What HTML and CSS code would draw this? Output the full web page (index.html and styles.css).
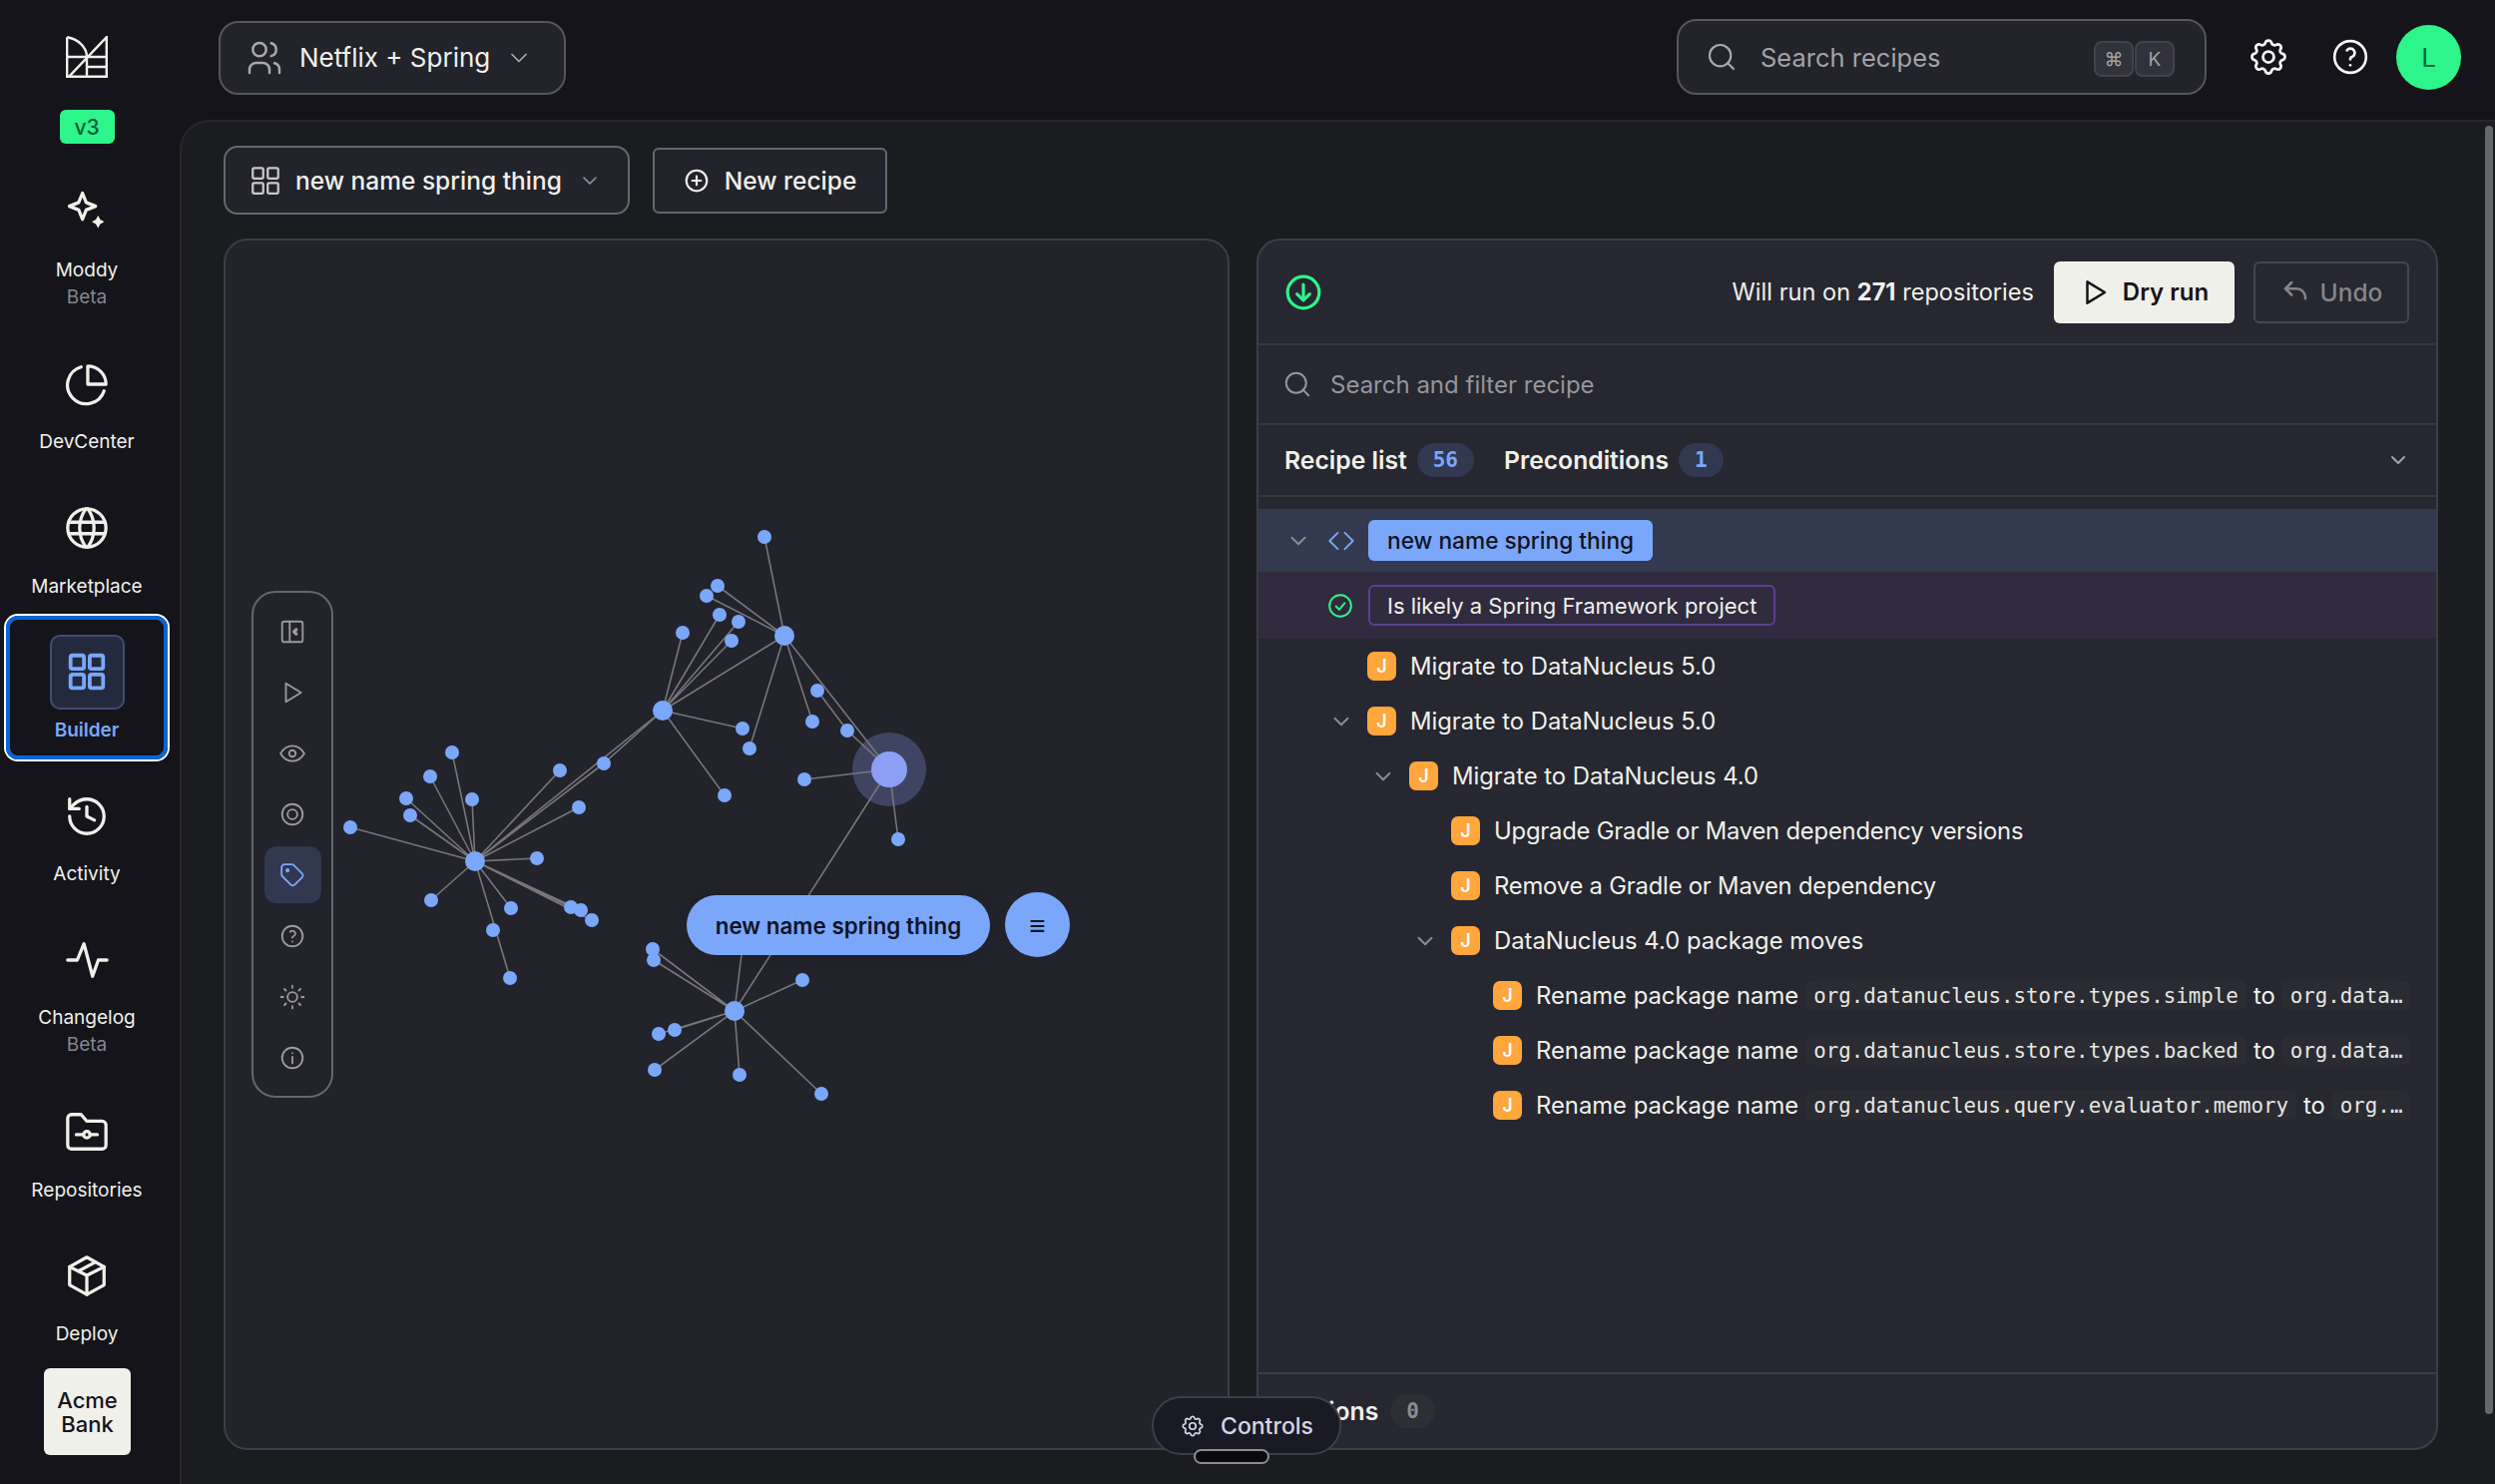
FILE: index.html
```html
<!DOCTYPE html>
<html lang="en">
  <head>
    <meta charset="UTF-8" />
    <meta name="viewport" content="width=device-width, initial-scale=1.0" />
    <title>Recipe Builder</title>
    <link rel="stylesheet" href="styles.css">
  </head>
  <body>
    <svg class="sprite" xmlns="http://www.w3.org/2000/svg">
      <symbol id="i-chevron" viewBox="0 0 24 24"><path d="M6 9l6 6 6-6"/></symbol>
      <symbol id="i-users" viewBox="0 0 24 24"><circle cx="9" cy="7" r="4"/><path d="M3 21v-2a4 4 0 0 1 4-4h4a4 4 0 0 1 4 4v2"/><path d="M16 3.13a4 4 0 0 1 0 7.75"/><path d="M21 21v-2a4 4 0 0 0-3-3.85"/></symbol>
      <symbol id="i-search" viewBox="0 0 24 24"><circle cx="11" cy="11" r="8"/><path d="M21 21l-4.5-4.5"/></symbol>
      <symbol id="i-gear" viewBox="0 0 24 24"><path d="M10.325 4.317c.426-1.756 2.924-1.756 3.35 0a1.724 1.724 0 0 0 2.573 1.066c1.543-.94 3.31.826 2.37 2.37a1.724 1.724 0 0 0 1.065 2.572c1.756.426 1.756 2.924 0 3.35a1.724 1.724 0 0 0-1.066 2.573c.94 1.543-.826 3.31-2.37 2.37a1.724 1.724 0 0 0-2.572 1.065c-.426 1.756-2.924 1.756-3.35 0a1.724 1.724 0 0 0-2.573-1.066c-1.543.94-3.31-.826-2.37-2.37a1.724 1.724 0 0 0-1.065-2.572c-1.756-.426-1.756-2.924 0-3.35a1.724 1.724 0 0 0 1.066-2.573c-.94-1.543.826-3.31 2.37-2.37c1 .608 2.296.07 2.572-1.065z"/><circle cx="12" cy="12" r="3"/></symbol>
      <symbol id="i-help" viewBox="0 0 24 24"><circle cx="12" cy="12" r="9.5"/><path d="M12 17v.01"/><path d="M12 13.5a1.5 1.5 0 0 1 1-1.5a2.6 2.6 0 1 0-3-4"/></symbol>
      <symbol id="i-grid" viewBox="0 0 24 24"><rect x="3.5" y="3.5" width="7" height="7" rx="1"/><rect x="13.5" y="3.5" width="7" height="7" rx="1"/><rect x="3.5" y="13.5" width="7" height="7" rx="1"/><rect x="13.5" y="13.5" width="7" height="7" rx="1"/></symbol>
      <symbol id="i-plus" viewBox="0 0 24 24"><circle cx="12" cy="12" r="9.5"/><path d="M12 8v8M8 12h8"/></symbol>
      <symbol id="i-play" viewBox="0 0 24 24"><path d="M6 3.5v17L20 12z"/></symbol>
      <symbol id="i-undo" viewBox="0 0 24 24"><path d="M9 14L4 9l5-5"/><path d="M4 9h9a7 7 0 0 1 7 7v1"/></symbol>
      <symbol id="i-down" viewBox="0 0 24 24"><circle cx="12" cy="12" r="10"/><path d="M12 7v10M8 13l4 4 4-4"/></symbol>
      <symbol id="i-check" viewBox="0 0 24 24"><circle cx="12" cy="12" r="10"/><path d="M8 12.5l3 3 5-6"/></symbol>
      <symbol id="i-code" viewBox="0 0 24 24"><path d="M9 5l-7 7 7 7"/><path d="M15 5l7 7-7 7"/></symbol>
      <symbol id="i-spark" viewBox="0 0 32 32"><path d="M12.5 2l3 7.500 7.500 3-7.500 3-3 7.500-3-7.500-7.500-3 7.500-3z"/><path class="solid" d="M25 20l1.800 3.200 3.200 1.800-3.200 1.800-1.800 3.200-1.800-3.200-3.200-1.800 3.200-1.800z"/></symbol>
      <symbol id="i-pie" viewBox="0 0 24 24"><path d="M12.500 2.500V12H22a9.500 9.500 0 0 0-9.500-9.500z"/><path d="M9 3a9.800 9.800 0 1 0 12 12.500"/></symbol>
      <symbol id="i-globe" viewBox="0 0 24 24"><circle cx="12" cy="12" r="10"/><path d="M2.600 9h18.800M2.600 15h18.800"/><path d="M11.500 2a17 17 0 0 0 0 20M12.500 2a17 17 0 0 1 0 20"/></symbol>
      <symbol id="i-history" viewBox="0 0 24 24"><path d="M3 12a9 9 0 1 0 9-9 9.750 9.750 0 0 0-6.740 2.740L3 8"/><path d="M3 3v5h5"/><path d="M12 7v5l4 2"/></symbol>
      <symbol id="i-pulse" viewBox="0 0 24 24"><path d="M2 12h5l3.500-8.500 4.500 17 3-8.500h4.500"/></symbol>
      <symbol id="i-folder" viewBox="0 0 24 24"><path d="M4.500 3H9l3 3.500h8a2 2 0 0 1 2 2V19a2 2 0 0 1-2 2H4a2 2 0 0 1-2-2V5a2 2 0 0 1 2-2"/><circle cx="12" cy="13.500" r="1.700"/><path d="M6.500 13.500h3.800M13.700 13.500h3.800"/></symbol>
      <symbol id="i-box" viewBox="0 0 24 24"><path d="M12 2.500l9 5v9.500l-9 5-9-5V7.500z"/><path d="M12 12l9-4.500M12 12v10M12 12L3 7.500M16.500 5l-9 4.800"/></symbol>
      <symbol id="i-collapse" viewBox="0 0 24 24"><rect x="2.500" y="2.500" width="19" height="19" rx="2"/><path d="M9.500 2.500v19"/><path class="thick" d="M15.500 10l-2 2 2 2"/></symbol>
      <symbol id="i-eye" viewBox="0 0 24 24"><circle cx="12" cy="12" r="3"/><path d="M23 12c-2.800 4.700-6.400 7-11 7s-8.200-2.300-11-7c2.800-4.700 6.400-7 11-7s8.200 2.300 11 7"/></symbol>
      <symbol id="i-target" viewBox="0 0 24 24"><circle cx="12" cy="12" r="9.500"/><circle cx="12" cy="12" r="4.500"/></symbol>
      <symbol id="i-tag" viewBox="0 0 24 24"><circle cx="7.500" cy="7.500" r="1"/><path d="M2 5v6.500a2 2 0 0 0 .6 1.400l8 8a2.400 2.400 0 0 0 3.400 0l7-7a2.400 2.400 0 0 0 0-3.400l-8-8A2 2 0 0 0 11.500 2H5a3 3 0 0 0-3 3z"/></symbol>
      <symbol id="i-sun" viewBox="0 0 24 24"><circle cx="12" cy="12" r="4.500"/><path d="M1.500 12h2M12 1.500v2M20.500 12h2M12 20.500v2M4.600 4.600l1.400 1.400M19.400 4.600L18 6M18 18l1.400 1.400M6 18l-1.400 1.400"/></symbol>
      <symbol id="i-info" viewBox="0 0 24 24"><circle cx="12" cy="12" r="9.500"/><path d="M12 7.500v.01M12 11v6"/></symbol>
      <symbol id="i-logo" viewBox="0 0 42 42"><path d="M1.200 1.200V40.800H40.800V1.200L3 40.800"/><path d="M1.200 1.200C12 3 21 11 21 21M1.200 21H40.800M21 31H40.800M21 21V40.800"/></symbol>
    </svg>

    <div class="app">
      <nav class="sidebar">
        <div class="brand">
          <svg class="logo"><use href="#i-logo"/></svg>
          <span class="version">v3</span>
        </div>
        <a class="nav-item"><span class="nav-icon"><svg class="icon icon-spark"><use href="#i-spark"/></svg></span><span class="nav-label">Moddy</span><span class="nav-note">Beta</span></a>
        <a class="nav-item"><span class="nav-icon"><svg class="icon"><use href="#i-pie"/></svg></span><span class="nav-label">DevCenter</span></a>
        <a class="nav-item"><span class="nav-icon"><svg class="icon"><use href="#i-globe"/></svg></span><span class="nav-label">Marketplace</span></a>
        <a class="nav-item active"><span class="nav-icon"><svg class="icon"><use href="#i-grid"/></svg></span><span class="nav-label">Builder</span></a>
        <a class="nav-item"><span class="nav-icon"><svg class="icon"><use href="#i-history"/></svg></span><span class="nav-label">Activity</span></a>
        <a class="nav-item"><span class="nav-icon"><svg class="icon"><use href="#i-pulse"/></svg></span><span class="nav-label">Changelog</span><span class="nav-note">Beta</span></a>
        <a class="nav-item"><span class="nav-icon"><svg class="icon"><use href="#i-folder"/></svg></span><span class="nav-label">Repositories</span></a>
        <a class="nav-item"><span class="nav-icon"><svg class="icon"><use href="#i-box"/></svg></span><span class="nav-label">Deploy</span></a>
        <div class="org-tile">Acme<br />Bank</div>
      </nav>

      <div class="page">
        <header class="topbar">
          <button class="org-select">
            <svg class="icon icon-users"><use href="#i-users"/></svg>
            <span>Netflix + Spring</span>
            <svg class="icon icon-chevron"><use href="#i-chevron"/></svg>
          </button>
          <div class="topbar-right">
            <div class="global-search">
              <svg class="icon icon-search"><use href="#i-search"/></svg>
              <span class="global-search-text">Search recipes</span>
              <kbd class="key">⌘</kbd><kbd class="key">K</kbd>
            </div>
            <svg class="icon icon-top icon-gear"><use href="#i-gear"/></svg>
            <svg class="icon icon-top"><use href="#i-help"/></svg>
            <div class="avatar">L</div>
          </div>
        </header>

        <main class="main">
          <div class="toolbar">
            <button class="recipe-select">
              <svg class="icon icon-grid"><use href="#i-grid"/></svg>
              <span>new name spring thing</span>
              <svg class="icon icon-chevron-sm"><use href="#i-chevron"/></svg>
            </button>
            <button class="new-recipe">
              <svg class="icon icon-plus"><use href="#i-plus"/></svg>
              <span>New recipe</span>
            </button>
          </div>

          <div class="panels">
            <section class="graph-panel">
              <svg class="graph" viewBox="226 241 1004 1210">
                <circle class="halo" cx="891" cy="771" r="37"/>
                <g class="edges">
                  <path d="M476 863L351 829M476 863L411 817M476 863L407 800M476 863L431 778M476 863L453 754M476 863L473 801M476 863L561 772M476 863L580 809M476 863L664 712M476 863L605 765M476 863L538 860M476 863L572 909M476 863L582 912M476 863L593 922M476 863L512 910M476 863L511 980M476 863L432 902"/>
                  <path d="M664 712L605 765M664 712L684 634M664 712L721 616M664 712L740 623M664 712L733 642M664 712L786 637M664 712L744 730M664 712L726 797"/>
                  <path d="M786 637L766 538M786 637L719 587M786 637L708 597M786 637L751 750M786 637L814 723M786 637L891 771M819 692L849 732L891 771"/>
                  <path d="M891 771L806 781M891 771L900 841M891 771L736 1013M736 1013L750 900"/>
                  <path d="M736 1013L654 951M736 1013L655 962M736 1013L804 982M736 1013L676 1032M736 1013L660 1036M736 1013L656 1072M736 1013L741 1077M736 1013L823 1096"/>
                </g>
                <g class="leaves">
                  <circle cx="351" cy="829" r="7"/><circle cx="411" cy="817" r="7"/><circle cx="407" cy="800" r="7"/><circle cx="431" cy="778" r="7"/><circle cx="453" cy="754" r="7"/><circle cx="473" cy="801" r="7"/><circle cx="561" cy="772" r="7"/><circle cx="580" cy="809" r="7"/><circle cx="605" cy="765" r="7"/><circle cx="538" cy="860" r="7"/><circle cx="572" cy="909" r="7"/><circle cx="582" cy="912" r="7"/><circle cx="593" cy="922" r="7"/><circle cx="512" cy="910" r="7"/><circle cx="494" cy="932" r="7"/><circle cx="511" cy="980" r="7"/><circle cx="432" cy="902" r="7"/>
                  <circle cx="684" cy="634" r="7"/><circle cx="721" cy="616" r="7"/><circle cx="740" cy="623" r="7"/><circle cx="733" cy="642" r="7"/><circle cx="744" cy="730" r="7"/><circle cx="726" cy="797" r="7"/>
                  <circle cx="766" cy="538" r="7"/><circle cx="719" cy="587" r="7"/><circle cx="708" cy="597" r="7"/><circle cx="751" cy="750" r="7"/><circle cx="814" cy="723" r="7"/><circle cx="819" cy="692" r="7"/><circle cx="849" cy="732" r="7"/>
                  <circle cx="806" cy="781" r="7"/><circle cx="900" cy="841" r="7"/>
                  <circle cx="654" cy="951" r="7"/><circle cx="655" cy="962" r="7"/><circle cx="804" cy="982" r="7"/><circle cx="676" cy="1032" r="7"/><circle cx="660" cy="1036" r="7"/><circle cx="656" cy="1072" r="7"/><circle cx="741" cy="1077" r="7"/><circle cx="823" cy="1096" r="7"/>
                  <circle cx="476" cy="863" r="10"/><circle cx="664" cy="712" r="10"/><circle cx="786" cy="637" r="10"/><circle cx="736" cy="1013" r="10"/>
                </g>
                <circle class="focus" cx="891" cy="771" r="18"/>
              </svg>

              <div class="rail">
                <span class="rail-item"><svg class="icon"><use href="#i-collapse"/></svg></span>
                <span class="rail-item"><svg class="icon"><use href="#i-play"/></svg></span>
                <span class="rail-item"><svg class="icon"><use href="#i-eye"/></svg></span>
                <span class="rail-item"><svg class="icon"><use href="#i-target"/></svg></span>
                <span class="rail-item active"><svg class="icon"><use href="#i-tag"/></svg></span>
                <span class="rail-item"><svg class="icon"><use href="#i-help"/></svg></span>
                <span class="rail-item"><svg class="icon"><use href="#i-sun"/></svg></span>
                <span class="rail-item"><svg class="icon"><use href="#i-info"/></svg></span>
              </div>

              <div class="node-label">new name spring thing</div>
              <div class="node-menu">≡</div>
            </section>

            <section class="recipe-panel">
              <div class="run-bar">
                <svg class="icon icon-status"><use href="#i-down"/></svg>
                <span class="run-text">Will run on <b>271</b> repositories</span>
                <button class="dry-run"><svg class="icon icon-btn"><use href="#i-play"/></svg>Dry run</button>
                <button class="undo"><svg class="icon icon-btn"><use href="#i-undo"/></svg>Undo</button>
              </div>
              <div class="filter-bar">
                <svg class="icon icon-filter"><use href="#i-search"/></svg>
                <span>Search and filter recipe</span>
              </div>
              <div class="tab-bar">
                <span class="tab-name">Recipe list</span>
                <span class="count">56</span>
                <span class="tab-name tab-second">Preconditions</span>
                <span class="count">1</span>
                <svg class="icon icon-tabs-chevron"><use href="#i-chevron"/></svg>
              </div>

              <div class="tree">
                <div class="tree-root">
                  <svg class="icon icon-caret"><use href="#i-chevron"/></svg>
                  <svg class="icon icon-code"><use href="#i-code"/></svg>
                  <span class="root-chip">new name spring thing</span>
                </div>
                <div class="tree-precondition">
                  <svg class="icon icon-ok"><use href="#i-check"/></svg>
                  <span class="pre-chip">Is likely a Spring Framework project</span>
                </div>

                <div class="tree-row lvl-0"><span class="caret-slot"></span><span class="java">J</span><span class="row-text">Migrate to DataNucleus 5.0</span></div>
                <div class="tree-row lvl-0"><span class="caret-slot"><svg class="icon icon-caret"><use href="#i-chevron"/></svg></span><span class="java">J</span><span class="row-text">Migrate to DataNucleus 5.0</span></div>
                <div class="tree-row lvl-1"><span class="caret-slot"><svg class="icon icon-caret"><use href="#i-chevron"/></svg></span><span class="java">J</span><span class="row-text">Migrate to DataNucleus 4.0</span></div>
                <div class="tree-row lvl-2"><span class="caret-slot"></span><span class="java">J</span><span class="row-text row-long">Upgrade Gradle or Maven dependency versions</span></div>
                <div class="tree-row lvl-2"><span class="caret-slot"></span><span class="java">J</span><span class="row-text row-long">Remove a Gradle or Maven dependency</span></div>
                <div class="tree-row lvl-2"><span class="caret-slot"><svg class="icon icon-caret"><use href="#i-chevron"/></svg></span><span class="java">J</span><span class="row-text">DataNucleus 4.0 package moves</span></div>
                <div class="tree-row lvl-3"><span class="caret-slot"></span><span class="java">J</span><span class="row-text">Rename package name</span><code class="pkg">org.datanucleus.store.types.simple</code><span class="row-to">to</span><code class="pkg">org.data…</code></div>
                <div class="tree-row lvl-3"><span class="caret-slot"></span><span class="java">J</span><span class="row-text">Rename package name</span><code class="pkg">org.datanucleus.store.types.backed</code><span class="row-to">to</span><code class="pkg">org.data…</code></div>
                <div class="tree-row lvl-3"><span class="caret-slot"></span><span class="java">J</span><span class="row-text">Rename package name</span><code class="pkg">org.datanucleus.query.evaluator.memory</code><span class="row-to">to</span><code class="pkg">org.…</code></div>
              </div>

              <div class="options-bar">
                <span class="tab-name">Options</span>
                <span class="count count-empty">0</span>
              </div>
            </section>
          </div>

          <div class="scrollbar"></div>
          <div class="controls">
            <svg class="icon icon-controls"><use href="#i-gear"/></svg>
            <span>Controls</span>
          </div>
          <div class="controls-handle"></div>
        </main>
      </div>
    </div>
  </body>
</html>
```

FILE: styles.css
```css
* {
  box-sizing: border-box;
}

body {
  margin: 0;
  padding: 0;
  font-family: Inter, "Noto Sans", sans-serif;
  background-color: #14141a;
  color: #f0f0ea;
  height: 100vh;
  overflow: hidden;
}

button {
  font-family: inherit;
  cursor: pointer;
  white-space: nowrap;
}

.sprite {
  display: none;
}

.sprite .solid {
  fill: currentColor;
  stroke: none;
}

.sprite .thick {
  stroke-width: 3;
}

.icon {
  fill: none;
  stroke: currentColor;
  stroke-width: 2;
  stroke-linecap: round;
  stroke-linejoin: round;
  flex-shrink: 0;
}

.app {
  display: flex;
  height: 100%;
}

/* left nav */
.sidebar {
  width: 180px;
  flex-shrink: 0;
  padding-left: 6px;
  display: flex;
  flex-direction: column;
}

.brand {
  height: 156px;
  width: 162px;
  padding-top: 36px;
  display: flex;
  flex-direction: column;
  align-items: center;
  gap: 32px;
}

.logo {
  width: 42px;
  height: 42px;
  fill: none;
  stroke: #f0f0ea;
  stroke-width: 2.4;
}

.version {
  width: 55px;
  height: 34px;
  border-radius: 6px;
  background-color: #2df58b;
  color: #0f5c38;
  font-size: 21px;
  font-weight: 500;
  display: flex;
  align-items: center;
  justify-content: center;
}

.nav-item {
  width: 162px;
  padding: 19px 0 16.250px;
  display: flex;
  flex-direction: column;
  align-items: center;
  border-radius: 12px;
}

.nav-icon {
  width: 75px;
  height: 75px;
  margin-bottom: 7px;
  border-radius: 10px;
  display: flex;
  align-items: center;
  justify-content: center;
}

.nav-icon .icon {
  width: 46px;
  height: 46px;
  stroke-width: 1.700;
}

.nav-icon .icon-spark {
  width: 40px;
  height: 40px;
  stroke-width: 2.600;
  margin-bottom: 4px;
}

.nav-label {
  font-size: 19px;
  line-height: 27px;
}

.nav-note {
  font-size: 19px;
  line-height: 28px;
  color: #85858e;
}

.nav-item.active {
  border: 4px solid #0a66d6;
  box-shadow: 0 0 0 2px #ffffff;
  padding: 15px 0 12.250px;
}

.nav-item.active .nav-icon {
  background-color: #232a3d;
  border: 2px solid #3e4d73;
  color: #7ba7fa;
}

.nav-item.active .nav-icon .icon {
  stroke-width: 2;
}

.nav-item.active .nav-label {
  color: #7ba7fa;
  font-weight: 600;
}

.org-tile {
  width: 87px;
  height: 87px;
  margin: 5px 0 0 38px;
  background-color: #f0f0ea;
  color: #14141a;
  border-radius: 6px;
  font-size: 22px;
  font-weight: 500;
  line-height: 24px;
  text-align: center;
  display: flex;
  align-items: center;
  justify-content: center;
}

/* top bar */
.page {
  flex: 1;
  display: flex;
  flex-direction: column;
  min-width: 0;
}

.topbar {
  height: 120px;
  flex-shrink: 0;
  padding: 0 34px 0 39px;
  display: flex;
  align-items: center;
  justify-content: space-between;
}

.org-select {
  width: 348px;
  height: 74px;
  margin-top: -5px;
  padding: 0 24px;
  background-color: #22232b;
  border: 2px solid #55565c;
  border-radius: 20px;
  color: #f0f0ea;
  font-size: 26px;
  display: flex;
  align-items: center;
  gap: 15px;
}

.icon-users {
  width: 40px;
  height: 40px;
  color: #a9a9af;
  stroke-width: 1.500;
}

.icon-chevron {
  width: 28px;
  height: 28px;
  color: #a9a9af;
  stroke-width: 1.500;
}

.topbar-right {
  display: flex;
  align-items: center;
  gap: 42px;
  margin-top: -6px;
}

.global-search {
  width: 531px;
  height: 76px;
  padding: 0 30px 0 27px;
  background-color: #22232b;
  border: 2px solid #55565c;
  border-radius: 20px;
  display: flex;
  align-items: center;
  font-size: 25.500px;
  color: #a2a2a8;
}

.icon-search {
  width: 32px;
  height: 32px;
  stroke-width: 1.600;
  color: #a9a9af;
}

.global-search-text {
  flex: 1;
  margin-left: 23px;
}

.key {
  width: 40px;
  height: 36px;
  margin: 4px 0 0 1px;
  background-color: #31323b;
  border: 2px solid #42434c;
  border-radius: 8px;
  font-family: Inter, sans-serif;
  font-size: 19px;
  color: #a2a2a8;
  display: flex;
  align-items: center;
  justify-content: center;
}

.icon-top {
  width: 40px;
  height: 40px;
  stroke-width: 1.600;
  color: #f6f6f2;
}

.icon-gear {
  width: 44px;
  height: 44px;
  margin: 0 -2px;
  stroke-width: 1.500;
}

.avatar {
  width: 65px;
  height: 65px;
  margin-left: -16px;
  border-radius: 50%;
  background-color: #2df58b;
  color: #0f6b3e;
  font-size: 26px;
  display: flex;
  align-items: center;
  justify-content: center;
}

/* main area */
.main {
  position: relative;
  flex: 1;
  min-height: 0;
  padding: 24px 55px 34px 42px;
  background-color: #1b1c20;
  border-top: 2px solid #26272c;
  border-left: 2px solid #26272c;
  border-top-left-radius: 30px;
  display: flex;
  flex-direction: column;
  gap: 24px;
}

.toolbar {
  height: 69px;
  flex-shrink: 0;
  display: flex;
  align-items: center;
  gap: 23px;
}

.recipe-select {
  width: 407px;
  height: 69px;
  padding: 0 28px 0 22px;
  background-color: #22232b;
  border: 2px solid #66676d;
  border-radius: 14px;
  color: #f0f0ea;
  font-size: 24.500px;
  font-weight: 500;
  display: flex;
  align-items: center;
  gap: 12px;
}

.icon-grid {
  width: 36px;
  height: 36px;
  color: #c9c9c9;
  stroke-width: 1.500;
}

.icon-chevron-sm {
  width: 24px;
  height: 24px;
  margin-left: 4px;
  color: #9a9aa0;
  stroke-width: 1.500;
}

.new-recipe {
  width: 235px;
  height: 66px;
  padding: 0;
  background-color: #22232b;
  border: 2px solid #66676d;
  border-radius: 6px;
  color: #f0f0ea;
  font-size: 24.500px;
  font-weight: 500;
  display: flex;
  align-items: center;
  justify-content: center;
  gap: 15px;
}

.icon-plus {
  width: 26px;
  height: 26px;
}

.panels {
  flex: 1;
  min-height: 0;
  display: grid;
  grid-template-columns: 1008px 1184px;
  gap: 27px;
}

/* graph */
.graph-panel {
  position: relative;
  background-color: #22232b;
  border: 2px solid #3d3e44;
  border-radius: 24px;
  overflow: hidden;
}

.graph {
  position: absolute;
  inset: 0;
  width: 1004px;
  height: 1210px;
}

.edges {
  fill: none;
  stroke: #77777a;
  stroke-width: 1.600;
}

.leaves {
  fill: #7ba7fa;
}

.halo {
  fill: #404463;
}

.focus {
  fill: #8c9ff5;
}

.rail {
  position: absolute;
  left: 26px;
  top: 351px;
  width: 82px;
  height: 508px;
  padding-top: 8px;
  background-color: #22232b;
  border: 2px solid #66676d;
  border-radius: 24px;
  display: flex;
  flex-direction: column;
  align-items: center;
}

.rail-item {
  width: 57px;
  height: 61px;
  flex-shrink: 0;
  border-radius: 12px;
  color: #9b9ba0;
  display: flex;
  align-items: center;
  justify-content: center;
}

.rail-item .icon {
  width: 26px;
  height: 26px;
  stroke-width: 1.700;
}

.rail-item.active {
  background-color: #313850;
  color: #7ba7fa;
  height: 57px;
  margin: 2px 0;
}

.node-label {
  position: absolute;
  left: 462px;
  top: 656px;
  width: 304px;
  height: 60px;
  border-radius: 30px;
  background-color: #7ba7fa;
  color: #111425;
  font-size: 22.400px;
  font-weight: 600;
  box-shadow: 0 0 24px rgba(0, 0, 0, 0.12);
  display: flex;
  align-items: center;
  justify-content: center;
}

.node-menu {
  position: absolute;
  left: 781px;
  top: 653px;
  width: 65px;
  height: 65px;
  border-radius: 50%;
  background-color: #7ba7fa;
  color: #111425;
  font-size: 28px;
  display: flex;
  align-items: center;
  justify-content: center;
}

/* recipe panel */
.recipe-panel {
  background-color: #262730;
  border: 2px solid #3d3e44;
  border-radius: 24px;
  overflow: hidden;
  display: flex;
  flex-direction: column;
}

.run-bar {
  height: 105px;
  flex-shrink: 0;
  padding: 0 27px 0 26px;
  border-bottom: 2px solid #36373e;
  display: flex;
  align-items: center;
}

.icon-status {
  width: 38px;
  height: 38px;
  color: #2df58b;
}

.run-text {
  margin-left: auto;
  font-size: 23.600px;
}

.dry-run,
.undo {
  height: 62px;
  padding: 0;
  display: flex;
  align-items: center;
  justify-content: center;
  font-size: 24.500px;
  font-weight: 500;
}

.dry-run {
  width: 181px;
  margin-left: 20px;
  gap: 13px;
  background-color: #f0f0ea;
  color: #14141a;
  border: none;
  border-radius: 6px;
  font-size: 24px;
  font-weight: 600;
}

.undo {
  width: 156px;
  margin-left: 19px;
  gap: 10px;
  background-color: transparent;
  color: #85858a;
  border: 2px solid #45464d;
  border-radius: 6px;
}

.icon-btn {
  width: 30px;
  height: 30px;
}

.filter-bar {
  height: 80px;
  flex-shrink: 0;
  padding: 0 29px 0 24px;
  border-bottom: 2px solid #36373e;
  display: flex;
  align-items: center;
  gap: 18px;
  font-size: 24px;
  color: #95959b;
}

.icon-filter {
  width: 30px;
  height: 30px;
  stroke-width: 1.600;
}

.tab-bar {
  height: 72px;
  flex-shrink: 0;
  padding: 0 26px;
  border-bottom: 2px solid #36373e;
  display: flex;
  align-items: center;
}

.tab-name {
  font-size: 24.700px;
  font-weight: 600;
}

.tab-second {
  margin-left: 30px;
}

.count {
  min-width: 42px;
  height: 34px;
  margin-left: 10px;
  padding: 0 16px;
  border-radius: 17px;
  background-color: #313850;
  color: #7ba7fa;
  font-family: "DejaVu Sans Mono", monospace;
  font-size: 21px;
  font-weight: 700;
  display: flex;
  align-items: center;
  justify-content: center;
}

.count-empty {
  background-color: #2d2e36;
  color: #8c8c92;
  margin-left: 12px;
}

.icon-tabs-chevron {
  width: 24px;
  height: 24px;
  margin-left: auto;
  color: #a2a2a8;
}

.tree {
  flex: 1;
  min-height: 0;
  padding-top: 12px;
}

.tree-root {
  height: 63px;
  padding-left: 27px;
  background-color: #333a4f;
  display: flex;
  align-items: center;
}

.icon-caret {
  width: 26px;
  height: 26px;
  color: #8c8c92;
  stroke-width: 1.800;
}

.icon-code {
  width: 28px;
  height: 28px;
  margin-left: 16px;
  color: #7ba7fa;
  stroke-width: 1.600;
}

.root-chip {
  height: 41px;
  margin-left: 13px;
  padding: 0 19px;
  background-color: #7ba7fa;
  border-radius: 6px;
  color: #111425;
  font-size: 22.700px;
  font-weight: 500;
  display: flex;
  align-items: center;
}

.tree-precondition {
  height: 67px;
  padding-left: 69px;
  background-color: #302b3f;
  display: flex;
  align-items: center;
}

.icon-ok {
  width: 26px;
  height: 26px;
  color: #2df58b;
  stroke-width: 1.800;
}

.pre-chip {
  height: 41px;
  margin-left: 15px;
  padding: 0 17px;
  border: 2px solid #5e3f91;
  border-radius: 6px;
  font-size: 22px;
  display: flex;
  align-items: center;
}

.tree-row {
  height: 55px;
  display: flex;
  align-items: center;
  font-size: 23.800px;
  white-space: nowrap;
}

.lvl-0 { padding-left: 69px; }
.lvl-1 { padding-left: 111px; }
.lvl-2 { padding-left: 153px; }
.lvl-3 { padding-left: 195px; }

.caret-slot {
  width: 28px;
  margin-right: 12px;
  flex-shrink: 0;
  display: flex;
  align-items: center;
  justify-content: center;
}

.java {
  width: 29px;
  height: 29px;
  margin-right: 14px;
  flex-shrink: 0;
  background-color: #ffa63d;
  border-radius: 7px;
  color: #ffffff;
  font-size: 18px;
  font-weight: 600;
  display: flex;
  align-items: center;
  justify-content: center;
}

.row-long {
  letter-spacing: -0.200px;
}

.pkg {
  height: 29px;
  margin-left: 7px;
  padding: 1px 8px 0;
  background-color: #2a2b33;
  border-radius: 6px;
  font-family: "DejaVu Sans Mono", monospace;
  font-size: 20.800px;
  line-height: 28px;
  color: #e6e6e0;
}

.row-to {
  margin-left: 7px;
}

.options-bar {
  height: 76px;
  flex-shrink: 0;
  padding: 0 27px;
  border-top: 2px solid #3d3e44;
  display: flex;
  align-items: center;
}

/* overlays */
.scrollbar {
  position: absolute;
  right: 2px;
  top: 4px;
  width: 8px;
  height: 1291px;
  background-color: #66676c;
  border-radius: 4px;
}

.controls {
  position: absolute;
  left: 972px;
  top: 1277px;
  width: 190px;
  height: 59px;
  background-color: #191a24;
  border: 2px solid #3d3e46;
  border-radius: 30px;
  color: #d5d5e8;
  font-size: 23px;
  font-weight: 500;
  display: flex;
  align-items: center;
  justify-content: center;
  gap: 15px;
}

.icon-controls {
  width: 26px;
  height: 26px;
  stroke-width: 1.600;
}

.controls-handle {
  position: absolute;
  left: 1014px;
  top: 1330px;
  width: 76px;
  height: 15px;
  background-color: #0a0a0d;
  border: 2px solid #8d8d8f;
  border-radius: 8px;
}
```
